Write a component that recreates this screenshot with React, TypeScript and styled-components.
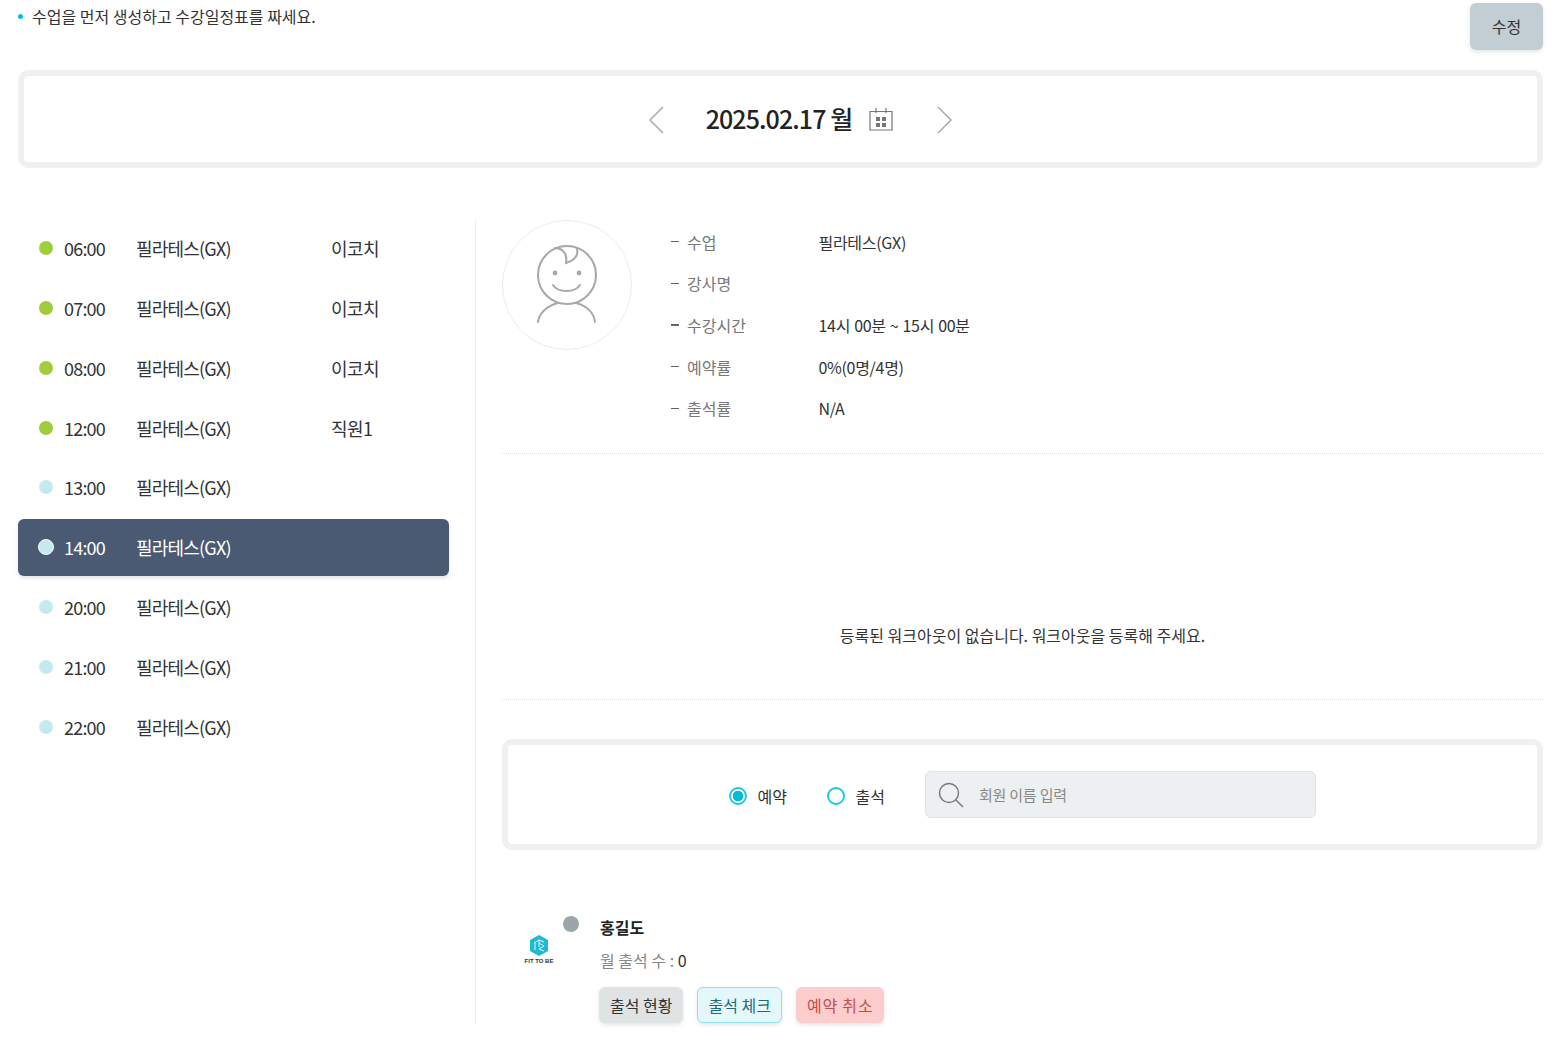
import React from "react";
import styled, { createGlobalStyle } from "styled-components";

const GlobalStyle = createGlobalStyle`
  html, body {
    margin: 0;
    padding: 0;
    background: #fff;
  }
  body {
    font-family: "Noto Sans CJK KR", "Noto Sans", sans-serif;
    color: #222;
  }
  * { box-sizing: border-box; }
`;

const Page = styled.div`
  width: 1558px;
  height: 1060px;
  padding: 3px 15px 0 18px;
  overflow: hidden;
`;

const TopRow = styled.div`
  display: flex;
  justify-content: space-between;
  align-items: flex-start;
  height: 67px;
`;

const Notice = styled.p`
  margin: -1px 0 0;
  font-size: 16px;
  line-height: 28px;
  color: #333;
  display: flex;
  align-items: center;
  gap: 9px;
  &::before {
    content: "";
    width: 5px;
    height: 5px;
    margin-top: 1px;
    border-radius: 50%;
    background: #00c2de;
  }
`;

const EditButton = styled.button`
  width: 73px;
  height: 47px;
  padding: 0 0 2px;
  border: 0;
  border-radius: 6px;
  background: #c2cdd4;
  box-shadow: 0 2px 4px rgba(0, 0, 0, 0.1);
  font: inherit;
  font-size: 16px;
  color: #333;
`;

const Panel = styled.div`
  border: 6px solid #f0f0f0;
  border-radius: 10px;
  background: #fff;
`;

const DatePanel = styled(Panel)`
  height: 98px;
  display: flex;
  align-items: center;
  justify-content: center;
`;

const DateBar = styled.div`
  display: flex;
  align-items: center;
  margin-left: 40px;
`;

const DateText = styled.div`
  font-size: 25px;
  font-weight: 500;
  letter-spacing: -0.9px;
  color: #222;
  line-height: 36px;
  margin: 0 17px 2px 42px;
  white-space: nowrap;
`;

const NextSlot = styled.span`
  margin-left: 44px;
  display: flex;
`;

const ChevronSvg = styled.svg`
  display: block;
  margin-top: 2px;
`;

const Columns = styled.div`
  display: flex;
  margin-top: 52px;
`;

const Sidebar = styled.div`
  width: 458px;
  height: 804px;
  padding-right: 26px;
  border-right: 1px solid #eee;
  flex: none;
`;

const Row = styled.div<{ $active?: boolean }>`
  display: flex;
  align-items: center;
  height: 57px;
  margin-bottom: 3px;
  padding: 0 0 2px 20px;
  border-radius: 6px;
  font-size: 18px;
  color: ${(p) => (p.$active ? "#fff" : "#333")};
  background: ${(p) => (p.$active ? "#4a5a72" : "transparent")};
  box-shadow: ${(p) => (p.$active ? "0 2px 4px rgba(0,0,0,0.12)" : "none")};
  &:nth-child(5) {
    margin-top: -1px;
  }
`;

const Dot = styled.span<{ $color: string; $active?: boolean }>`
  width: ${(p) => (p.$active ? "16px" : "14px")};
  height: ${(p) => (p.$active ? "16px" : "14px")};
  margin: ${(p) => (p.$active ? "0 10px 0 0" : "0 11px 0 1px")};
  border: ${(p) => (p.$active ? "1px solid #fff" : "0")};
  border-radius: 50%;
  background: ${(p) => p.$color};
  flex: none;
`;

const Time = styled.span`
  width: 72px;
  letter-spacing: -0.8px;
  flex: none;
`;

const ClassName = styled.span`
  width: 195px;
  letter-spacing: -0.8px;
  flex: none;
`;

const Teacher = styled.span`
  letter-spacing: -0.6px;
`;

const Detail = styled.div`
  flex: 1;
  padding-left: 26px;
  min-width: 0;
`;

const Info = styled.div`
  display: flex;
  height: 234px;
  border-bottom: 1px dotted #ddd;
`;

const Avatar = styled.div`
  width: 130px;
  height: 130px;
  border: 1px solid #ececec;
  border-radius: 50%;
  display: flex;
  align-items: center;
  justify-content: center;
  flex: none;
`;

const InfoList = styled.dl`
  margin: 1px 0 0 39px;
  display: grid;
  grid-template-columns: 147.5px auto;
  grid-auto-rows: 41.6px;
  align-items: center;
  align-content: start;
  font-size: 16px;
`;

const InfoLabel = styled.dt<{ $thick?: boolean }>`
  color: #777;
  display: flex;
  align-items: center;
  gap: 8px;
  &::before {
    content: "";
    width: 8px;
    height: ${(p) => (p.$thick ? "2px" : "1px")};
    background: #666;
  }
`;

const InfoValue = styled.dd`
  margin: 0;
  color: #333;
  letter-spacing: -0.3px;
  word-spacing: 0.8px;
`;

const EmptyMessage = styled.div`
  height: 246px;
  padding-top: 167px;
  border-bottom: 1px dotted #ddd;
  text-align: center;
  font-size: 16px;
  line-height: 28px;
  color: #333;
`;

const FilterPanel = styled(Panel)`
  height: 111px;
  margin-top: 39px;
  display: flex;
  align-items: center;
  padding: 0 0 0 221px;
`;

const Radio = styled.label`
  display: flex;
  align-items: center;
  gap: 10.5px;
  margin: 3px 40px 0 0;
  font-size: 16px;
  color: #333;
`;

const RadioMark = styled.span<{ $checked?: boolean }>`
  width: 18px;
  height: 18px;
  margin-top: -1px;
  border: 2px solid #1cc8e3;
  border-radius: 50%;
  background: ${(p) => (p.$checked ? "radial-gradient(circle, #00bcd9 0 5px, #fff 5.5px)" : "#fff")};
`;

const SearchBox = styled.div`
  width: 391px;
  height: 47px;
  padding-left: 12px;
  display: flex;
  align-items: center;
  gap: 15px;
  border: 1px solid #e0e3e5;
  border-radius: 6px;
  background: #edf0f1;
  font-size: 15px;
  letter-spacing: -0.2px;
  color: #888;
`;

const Member = styled.div`
  display: flex;
  margin-top: 60px;
`;

const LogoWrap = styled.div`
  position: relative;
  width: 98px;
  height: 110px;
  flex: none;
  padding: 25px 0 0 22px;
`;

const StatusDot = styled.span`
  position: absolute;
  left: 61px;
  top: 6px;
  width: 16px;
  height: 16px;
  border-radius: 50%;
  background: #9aa7aa;
`;

const LogoLabel = styled.div`
  width: 30px;
  margin-top: 2px;
  font-family: "Liberation Sans", sans-serif;
  font-size: 6px;
  font-weight: 700;
  line-height: 7px;
  color: #333;
  text-align: center;
  white-space: nowrap;
`;

const MemberBody = styled.div`
  display: flex;
  flex-direction: column;
  padding-top: 4px;
`;

const MemberName = styled.div`
  font-size: 16px;
  font-weight: 700;
  line-height: 26px;
  color: #222;
`;

const MemberStat = styled.div`
  margin-top: 7px;
  font-size: 16px;
  line-height: 26px;
  color: #888;
  b {
    font-weight: 400;
    color: #333;
  }
`;

const Actions = styled.div`
  display: flex;
  gap: 14px;
  margin: 14px 0 0 -1px;
`;

const ActionButton = styled.button<{ $bg: string; $fg: string; $line?: string; $track?: string }>`
  height: 36px;
  padding: 0 10px;
  border: 1px solid ${(p) => p.$line ?? p.$bg};
  border-radius: 6px;
  background: ${(p) => p.$bg};
  color: ${(p) => p.$fg};
  box-shadow: 0 2px 4px rgba(0, 0, 0, 0.1);
  font: inherit;
  font-size: 16px;
  letter-spacing: ${(p) => p.$track ?? "0"};
`;

const schedule = [
  { time: "06:00", teacher: "이코치", color: "#a0cd3c" },
  { time: "07:00", teacher: "이코치", color: "#a0cd3c" },
  { time: "08:00", teacher: "이코치", color: "#a0cd3c" },
  { time: "12:00", teacher: "직원1", color: "#a0cd3c" },
  { time: "13:00", color: "#c4eaf0" },
  { time: "14:00", color: "#c4eaf0", active: true },
  { time: "20:00", color: "#c4eaf0" },
  { time: "21:00", color: "#c4eaf0" },
  { time: "22:00", color: "#c4eaf0" },
];

const details = [
  { label: "수업", value: "필라테스(GX)" },
  { label: "강사명", value: "" },
  { label: "수강시간", value: "14시 00분 ~ 15시 00분", thick: true },
  { label: "예약률", value: "0%(0명/4명)" },
  { label: "출석률", value: "N/A" },
];

const Chevron = ({ dir }: { dir: "left" | "right" }) => (
  <ChevronSvg width="16" height="28" viewBox="0 0 16 28" fill="none" stroke="#aaa" strokeWidth="1.5">
    <path d={dir === "left" ? "M15 1 L2 14 L15 27" : "M1 1 L14 14 L1 27"} />
  </ChevronSvg>
);

const CalendarIcon = () => (
  <svg width="24" height="24" viewBox="0 0 24 24" fill="none">
    <path d="M1 4.5H23V23H1Z" stroke="#777" strokeWidth="1.2" />
    <path d="M7 1V6M17 1V6" stroke="#777" strokeWidth="1.2" />
    <path d="M7 10H11V14H7ZM13 10H17V14H13ZM7 16H11V20H7ZM13 16H17V20H13Z" fill="#777" />
  </svg>
);

const FaceIcon = () => (
  <svg width="62" height="80" viewBox="0 0 62 80" fill="none" stroke="#a8a8a8" strokeWidth="2" strokeLinecap="round">
    <circle cx="31" cy="30" r="29" />
    <path d="M19 3 C24 3 32 6 30 18 C36 16 43 12 41 4" />
    <circle cx="19" cy="28" r="1.4" fill="#a8a8a8" />
    <circle cx="43" cy="28" r="1.4" fill="#a8a8a8" />
    <path d="M17 40 C22 48 39 48 44 40" />
    <path d="M22 58 C11 61 3 68 2 77 M40 58 C51 61 58 68 59 77" />
  </svg>
);

const SearchIcon = () => (
  <svg width="26" height="26" viewBox="0 0 26 26" fill="none" stroke="#777" strokeWidth="1.4">
    <circle cx="11" cy="11" r="9.5" />
    <path d="M18 18 L25 25" />
  </svg>
);

const BrandMark = () => (
  <svg width="20" height="21" viewBox="0 0 20 21" style={{ display: "block", marginLeft: 5 }}>
    <path d="M10 0 L19 5 V16 L10 21 L1 16 V5 Z" fill="#1fb9d3" />
    <path d="M5 8 L10 5 L15 7 M6 8 V15 M10 5 V12 M10 8 L15 11 L10 14 L15 16" fill="none" stroke="#fff" strokeWidth="0.9" />
  </svg>
);

const App: React.FC = () => {
  return (
    <>
      <GlobalStyle />
      <Page>
        <TopRow>
          <Notice>수업을 먼저 생성하고 수강일정표를 짜세요.</Notice>
          <EditButton>수정</EditButton>
        </TopRow>
        <DatePanel>
          <DateBar>
            <Chevron dir="left" />
            <DateText>2025.02.17 월</DateText>
            <CalendarIcon />
            <NextSlot>
              <Chevron dir="right" />
            </NextSlot>
          </DateBar>
        </DatePanel>
        <Columns>
          <Sidebar>
            {schedule.map((item) => (
              <Row key={item.time} $active={item.active}>
                <Dot $color={item.color} $active={item.active} />
                <Time>{item.time}</Time>
                <ClassName>필라테스(GX)</ClassName>
                {item.teacher && <Teacher>{item.teacher}</Teacher>}
              </Row>
            ))}
          </Sidebar>
          <Detail>
            <Info>
              <Avatar>
                <FaceIcon />
              </Avatar>
              <InfoList>
                {details.map((d) => (
                  <React.Fragment key={d.label}>
                    <InfoLabel $thick={d.thick}>{d.label}</InfoLabel>
                    <InfoValue>{d.value}</InfoValue>
                  </React.Fragment>
                ))}
              </InfoList>
            </Info>
            <EmptyMessage>등록된 워크아웃이 없습니다. 워크아웃을 등록해 주세요.</EmptyMessage>
            <FilterPanel>
              <Radio>
                <RadioMark $checked />
                예약
              </Radio>
              <Radio>
                <RadioMark />
                출석
              </Radio>
              <SearchBox>
                <SearchIcon />
                회원 이름 입력
              </SearchBox>
            </FilterPanel>
            <Member>
              <LogoWrap>
                <StatusDot />
                <BrandMark />
                <LogoLabel>FIT TO BE</LogoLabel>
              </LogoWrap>
              <MemberBody>
                <MemberName>홍길도</MemberName>
                <MemberStat>
                  월 출석 수 : <b>0</b>
                </MemberStat>
                <Actions>
                  <ActionButton $bg="#e0e3e4" $fg="#333">출석 현황</ActionButton>
                  <ActionButton $bg="#e4f8fc" $fg="#1d6a78" $line="#8ce2f2">출석 체크</ActionButton>
                  <ActionButton $bg="#fdcccc" $fg="#c0504f" $track="0.8px">예약 취소</ActionButton>
                </Actions>
              </MemberBody>
            </Member>
          </Detail>
        </Columns>
      </Page>
    </>
  );
};

export default App;
